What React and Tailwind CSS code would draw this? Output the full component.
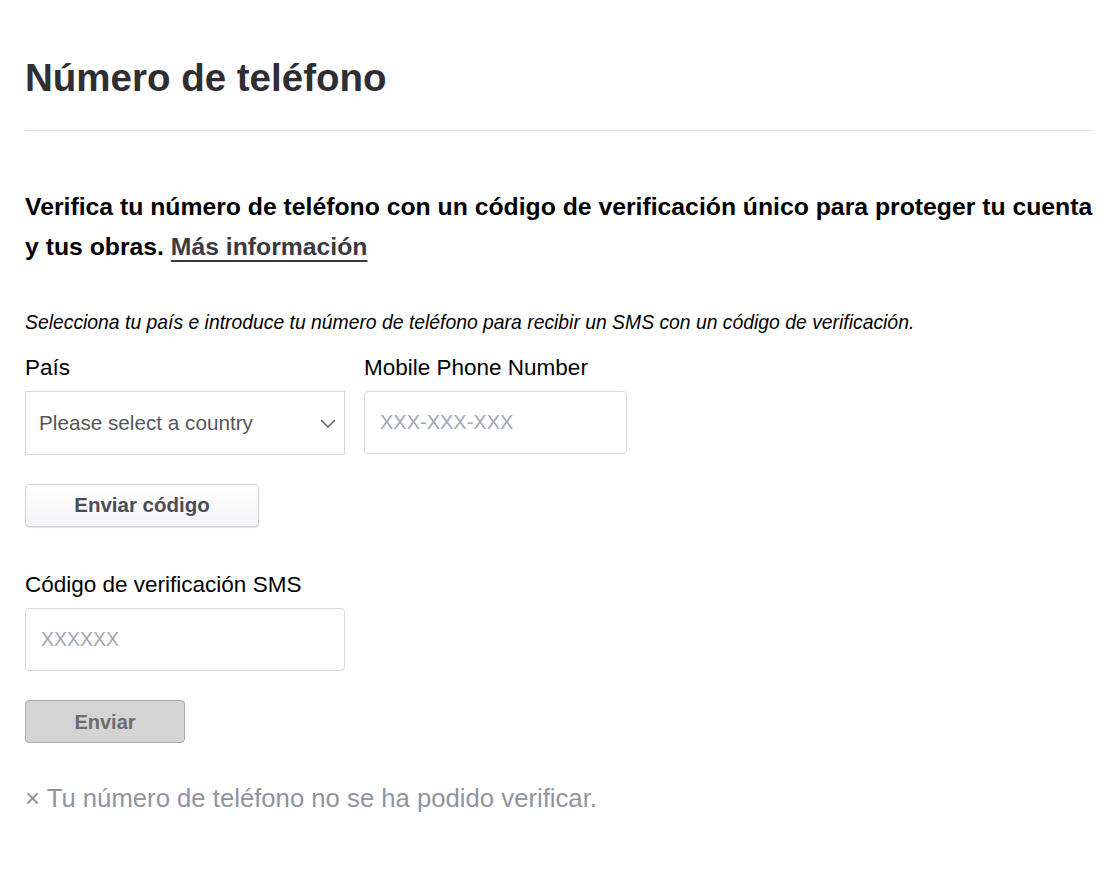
import React from 'react';

const FONT = { fontFamily: '"Liberation Sans", Arial, Helvetica, sans-serif' };

export default function App() {
  return (
    <div className="min-h-[878px] w-[1118px] bg-white" style={FONT}>
      <div className="px-[25px] pt-[55px]">
        {/* ── Header ─────────────────────── */}
        <h1 className="text-[38.5px] leading-[46px] font-bold text-[#2e2e33]">Número de teléfono</h1>
        <div className="mt-[29px] w-[1068px] border-t border-[#e2e2e2]" />

        {/* ── Intro ─────────────────────── */}
        <p className="mt-[56px] text-[24.75px] leading-[40px] font-semibold text-black whitespace-nowrap">
          Verifica tu número de teléfono con un código de verificación único para proteger tu cuenta
          <br />
          y tus obras.{' '}
          <a href="#" className="text-[#3a3a40] underline decoration-[2px] underline-offset-[5px]">Más información</a>
        </p>

        <p className="mt-[41px] text-[19.35px] leading-[28px] italic text-black">
          Selecciona tu país e introduce tu número de teléfono para recibir un SMS con un código de verificación.
        </p>

        {/* ── Country + phone ─────────────── */}
        <div className="mt-[18px] flex gap-[19px]">
          <div className="flex flex-col">
            <label className="text-[22.5px] leading-[28px] text-black">País</label>
            <div className="mt-[9px] flex h-[64px] w-[320px] items-center justify-between border border-[#d9d9d9] pl-[13px] pr-[7px]">
              <span className="text-[20.7px] text-[#55555c]">Please select a country</span>
              <svg width="18" height="18" viewBox="0 0 18 18" fill="none" stroke="#55555c" strokeWidth="1.4">
                <path d="M2 6l7 7 7-7" />
              </svg>
            </div>
          </div>
          <div className="flex flex-col">
            <label className="text-[22.5px] leading-[28px] text-black">Mobile Phone Number</label>
            <input
              placeholder="XXX-XXX-XXX"
              className="mt-[9px] h-[63px] w-[263px] rounded-[4px] border border-[#d9d9de] px-[15px] text-[20px] text-black placeholder:text-[#a3a8b3] outline-none"
              style={FONT}
            />
          </div>
        </div>

        <button
          className="mt-[29px] flex h-[43px] w-[234px] items-center justify-center rounded-[4px] border border-[#d2d2d6] bg-gradient-to-b from-white to-[#f3f3f6] text-[20.5px] font-bold text-[#4c4c56] shadow-[0_1px_1px_rgba(0,0,0,0.12)]"
          style={FONT}
        >
          Enviar código
        </button>

        {/* ── SMS code ─────────────────────── */}
        <label className="mt-[44px] block text-[22.5px] leading-[28px] text-black">Código de verificación SMS</label>
        <input
          placeholder="XXXXXX"
          className="mt-[9px] block h-[63px] w-[320px] rounded-[4px] border border-[#d9d9de] px-[15px] text-[19.5px] text-black placeholder:text-[#a3a8b3] outline-none"
          style={FONT}
        />

        <button
          className="mt-[29px] flex h-[43px] w-[160px] items-center justify-center rounded-[4px] border border-[#a9a9a9] bg-[#d4d4d4] text-[20px] font-bold text-[#6b6b6b]"
          style={FONT}
        >
          Enviar
        </button>

        <p className="mt-[40px] text-[25.7px] leading-[30px] text-[#9094a0]">× Tu número de teléfono no se ha podido verificar.</p>
      </div>
    </div>
  );
}
